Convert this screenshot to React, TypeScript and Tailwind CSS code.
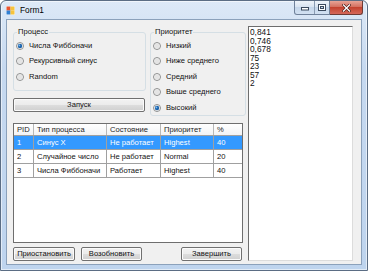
import React from "react";

function Radio({ checked }: { checked?: boolean }) {
  return (
    <svg width="8" height="8" viewBox="0 0 8 8" className="shrink-0">
      <circle cx="4" cy="4" r="3.5" fill="#f3f3f3" stroke="#8e8f8f" strokeWidth="1" />
      <circle cx="4" cy="4" r="2.5" fill="#e4e4e4" />
      {checked && (
        <>
          <circle cx="4" cy="4" r="2.2" fill="#1b64ae" />
          <circle cx="3.4" cy="3.4" r="0.9" fill="#7fbcef" />
        </>
      )}
    </svg>
  );
}

function RadioRow({ label, checked }: { label: string; checked?: boolean }) {
  return (
    <div className="flex h-[15.5px] items-center gap-[5px]">
      <Radio checked={checked} />
      <span className="text-[7.6px] leading-none text-[#111]">{label}</span>
    </div>
  );
}

function WinButton({ children, className = "" }: { children: React.ReactNode; className?: string }) {
  return (
    <button
      className={`flex h-[14px] items-center justify-center rounded-[2px] border border-[#707070] bg-[linear-gradient(#f2f2f2,#ebebeb_50%,#dddddd_50%,#cfcfcf)] text-[7.6px] leading-none text-[#111] shadow-[inset_0_0_0_1px_#fbfbfb] ${className}`}
    >
      {children}
    </button>
  );
}

const cols = ["w-[20px]", "w-[73px]", "w-[54px]", "w-[53px]", "flex-1"];

const header = ["PID", "Тип процесса", "Состояние", "Приоритет", "%"];

const rows = [
  ["1", "Синус X", "Не работает", "Highest", "40"],
  ["2", "Случайное число", "Не работает", "Normal", "20"],
  ["3", "Числа Фиббоначи", "Работает", "Highest", "40"],
];

const output = ["0,841", "0,746", "0,678", "75", "23", "57", "2"];

export default function App() {
  return (
    <div className="h-[271px] w-[368px] font-['Liberation_Sans',Arial,sans-serif]">
      <div className="flex h-full w-full flex-col rounded-t-[6px] border border-[#5b6d84] bg-[linear-gradient(#dde9f7,#c6d9f0_25%,#bed4ee)] shadow-[inset_0_0_0_1px_rgba(255,255,255,0.55)]">
        {/* title bar */}
        <div className="flex h-[18px] items-center pl-[5px]">
          <svg width="9" height="9" viewBox="0 0 9 9" className="shrink-0">
            <rect x="0" y="0" width="9" height="9" fill="#f3f6fa" />
            <rect x="0.5" y="0.5" width="4" height="4" fill="#e9542f" />
            <rect x="4.5" y="0.5" width="4" height="4" fill="#f6c33c" />
            <rect x="0.5" y="4.5" width="4" height="4" fill="#2f7fd3" />
            <rect x="4.5" y="4.5" width="4" height="4" fill="#f6c33c" />
          </svg>
          <span className="ml-[5px] text-[8.3px] leading-none text-black">Form1</span>
          <div className="mr-[4px] ml-auto flex self-start">
            <div className="flex h-[14px] w-[36px] overflow-hidden rounded-bl-[3px] border border-t-0 border-[#6f819a] bg-[linear-gradient(#eef3f9,#d6e2f0_50%,#c5d6ea_50%,#d2e1f2)]">
              <div className="flex w-[20px] items-center justify-center border-r border-[#8a9cb3]">
                <svg width="8" height="4" viewBox="0 0 8 4" className="mt-[3px]">
                  <rect x="0.5" y="0.5" width="7" height="2.5" fill="#fff" stroke="#3b4a5e" strokeWidth="1" />
                </svg>
              </div>
              <div className="flex flex-1 items-center justify-center">
                <svg width="8" height="7" viewBox="0 0 8 7">
                  <rect x="0.5" y="0.5" width="7" height="6" fill="none" stroke="#3b4a5e" strokeWidth="1" />
                  <rect x="1.5" y="1.5" width="5" height="4" fill="none" stroke="#fff" strokeWidth="1" />
                  <rect x="2.5" y="2.5" width="3" height="2" fill="none" stroke="#3b4a5e" strokeWidth="1" />
                </svg>
              </div>
            </div>
            <div className="flex h-[14px] w-[33px] items-center justify-center rounded-br-[3px] border border-t-0 border-l-0 border-[#6f3a34] bg-[linear-gradient(#e8a496,#d4705f_45%,#c4432f_50%,#d4685a)]">
              <svg width="9" height="8" viewBox="0 0 9 8">
                <path d="M1.5 1 L7.5 7 M7.5 1 L1.5 7" stroke="#4a1d17" strokeWidth="2.6" strokeLinecap="square" />
                <path d="M1.5 1 L7.5 7 M7.5 1 L1.5 7" stroke="#ffffff" strokeWidth="1.3" strokeLinecap="square" />
              </svg>
            </div>
          </div>
        </div>

        {/* client area */}
        <div className="mx-[5px] mb-[5px] flex flex-1 border border-[#8ba1bb] bg-[#f0f0f0] pt-[6px] pl-[6px]">
          <div className="flex w-[233px] flex-col pt-[1px]">
            <div className="flex h-[90px]">
              <div className="flex w-[133px] flex-col">
                <fieldset className="h-[64px] rounded-[3px] border border-[#d5dfe5] pl-[2px]">
                  <legend className="ml-[1px] px-[1px] text-[7.6px] leading-[10px] text-[#111]">Процесс</legend>
                  <div className="pt-[1px]">
                    <RadioRow label="Числа Фиббоначи" checked />
                    <RadioRow label="Рекурсивный синус" />
                    <RadioRow label="Random" />
                  </div>
                </fieldset>
                <WinButton className="mt-[7px] w-[132px]">Запуск</WinButton>
              </div>
              <fieldset className="ml-[4px] h-[89px] w-[96px] rounded-[3px] border border-[#d5dfe5] pl-[2px]">
                <legend className="ml-[1px] px-[1px] text-[7.6px] leading-[10px] text-[#111]">Приоритет</legend>
                <div className="pt-[1px]">
                  <RadioRow label="Низкий" />
                  <RadioRow label="Ниже среднего" />
                  <RadioRow label="Средний" />
                  <RadioRow label="Выше среднего" />
                  <RadioRow label="Высокий" checked />
                </div>
              </fieldset>
            </div>

            {/* data grid */}
            <div className="mt-[6px] h-[120px] w-[230px] border border-[#6e6e6e] bg-white">
              <div className="flex h-[12px] border-b border-[#a0a0a0] bg-[linear-gradient(#ffffff,#f2f3f5)]">
                {header.map((h, i) => (
                  <div
                    key={h}
                    className={`${cols[i]} flex items-center border-r border-[#b8b8b8] pl-[3px] text-[7.6px] leading-none text-[#1e1e1e] last:border-r-0`}
                  >
                    {h}
                  </div>
                ))}
              </div>
              {rows.map((r, ri) => (
                <div
                  key={ri}
                  className={`flex h-[14px] border-b border-[#a0a0a0] ${ri === 0 ? "bg-[#3399ff] text-white" : "text-[#111]"}`}
                >
                  {r.map((c, i) => (
                    <div
                      key={i}
                      className={`${cols[i]} flex items-center overflow-hidden border-r border-[#a0a0a0] pl-[3px] text-[7.6px] leading-none whitespace-nowrap last:border-r-0`}
                    >
                      {c}
                    </div>
                  ))}
                </div>
              ))}
            </div>

            <div className="mt-[4px] flex">
              <WinButton className="w-[62px]">Приостановить</WinButton>
              <WinButton className="ml-[6px] w-[61px]">Возобновить</WinButton>
              <WinButton className="ml-[39px] w-[61px]">Завершить</WinButton>
            </div>
          </div>

          {/* output text box */}
          <div className="ml-[2px] h-[235px] w-[105px] border border-t-[#6d6d6d] border-r-[#dcdcdc] border-b-[#dcdcdc] border-l-[#6d6d6d] bg-white pt-[1px] pl-[1px]">
            {output.map((l, i) => (
              <div key={i} className="text-[8.3px] leading-[8.5px] text-[#111]">
                {l}
              </div>
            ))}
          </div>
        </div>
      </div>
    </div>
  );
}
